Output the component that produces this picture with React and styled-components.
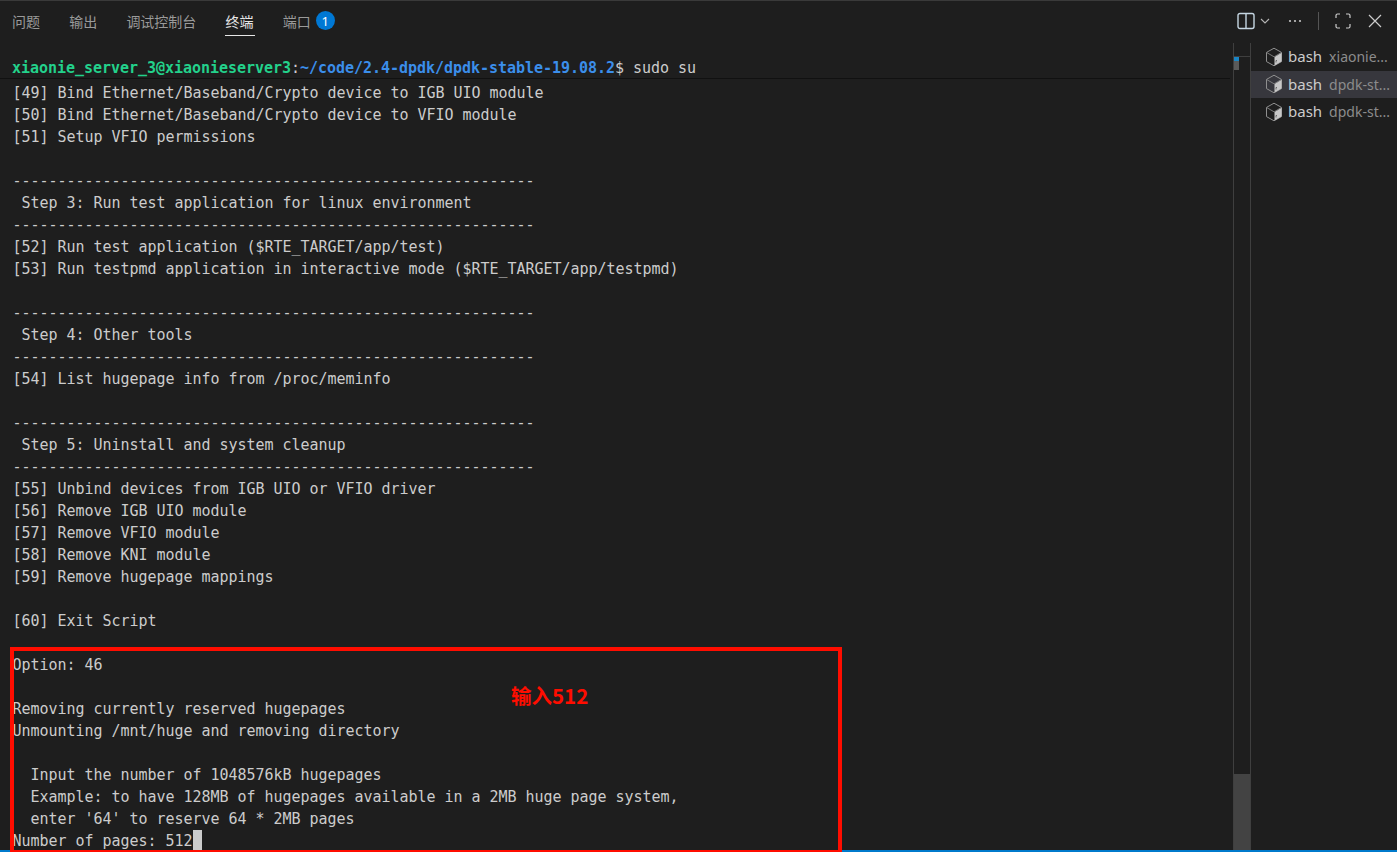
import React from "react";
import styled, { createGlobalStyle } from "styled-components";

const Global = createGlobalStyle`
  html, body { margin: 0; padding: 0; background: #1e1e1e; overflow: hidden; }
  #root { height: 852px; }
`;

const Page = styled.div`
  position: relative;
  width: 1397px;
  height: 852px;
  display: flex;
  flex-direction: column;
  background: #1e1e1e;
  border-top: 1px solid #3a3a3a;
  box-sizing: border-box;
  overflow: hidden;
`;
const TabBar = styled.div`
  height: 42px;
  flex: none;
  display: flex;
  align-items: flex-start;
  justify-content: space-between;
  padding: 0 15px 0 12px;
`;
const Tabs = styled.div`
  display: flex;
  gap: 29.2px;
  align-items: flex-start;
`;
const Tab = styled.div`
  height: 35px;
  padding-top: 10px;
  box-sizing: border-box;
  display: flex;
  gap: 5px;
  align-items: flex-start;
  font: 14px/20px "Noto Sans CJK SC", sans-serif;
  color: ${p => (p.$active ? "#e7e7e7" : "#9a9a9a")};
  border-bottom: ${p => (p.$active ? "1px solid #e7e7e7" : "none")};
  padding-left: ${p => (p.$active ? "1px" : "0")};
  padding-right: ${p => (p.$active ? "1px" : "0")};
  margin: 0 ${p => (p.$active ? "-1px" : "0")};
`;
const Badge = styled.span`
  width: 19px;
  height: 19px;
  border-radius: 50%;
  background: #0078d4;
  color: #fff;
  font: 13px/20px "Noto Sans", sans-serif;
  text-align: center;
`;
const Actions = styled.div`
  display: flex;
  align-items: center;
  height: 40px;
  color: #cccccc;
`;
const Sep = styled.div`
  width: 1px;
  height: 18px;
  background: #555;
  margin: 0 16px;
`;
const Icon = styled.svg`
  display: block;
  flex: none;
  margin-left: ${p => p.$ml || 0}px;
`;
const Main = styled.div`
  flex: 1;
  min-height: 0;
  display: flex;
`;
const TermWrap = styled.div`
  width: 1233px;
  flex: none;
  padding-top: 14px;
  display: flex;
  flex-direction: column;
  min-height: 0;
`;
const Sticky = styled.div`
  height: 21px;
  flex: none;
  padding-left: 12px;
  border-bottom: 1px solid #111;
  margin-right: 3px;
  font: 15px/22px "DejaVu Sans Mono", monospace;
  letter-spacing: -0.03px;
  color: #cccccc;
  white-space: pre;
  position: relative;
  z-index: 1;
  background: #1e1e1e;
`;
const Green = styled.b`
  color: #23d18b;
`;
const Blue = styled.b`
  color: #3b8eea;
`;
const Screen = styled.div`
  flex: 1;
  min-height: 0;
  overflow: hidden;
  margin-top: -19px;
  padding-left: 12.5px;
`;
const Line = styled.div`
  height: 22px;
  font: 15px/22px "DejaVu Sans Mono", monospace;
  letter-spacing: -0.03px;
  color: #cccccc;
  white-space: pre;
`;
const Cursor = styled.span`
  display: inline-block;
  width: 9px;
  height: 22px;
  vertical-align: top;
  background: #cccccc;
`;
const Scrollbar = styled.div`
  width: 18px;
  flex: none;
  position: relative;
  box-sizing: border-box;
  border-left: 1px solid #3f3f3f;
  border-right: 1px solid #3f3f3f;
  display: flex;
  flex-direction: column;
  justify-content: flex-end;
`;
const ScrollRule = styled.div`
  position: absolute;
  top: 13px;
  left: 0;
  right: 0;
  height: 1px;
  background: #3f3f3f;
`;
const MarkBlue = styled.div`
  position: absolute;
  top: 14px;
  left: 0;
  width: 5px;
  height: 4px;
  background: #1a85c4;
`;
const MarkGrey = styled.div`
  position: absolute;
  top: 18px;
  left: 0;
  width: 5px;
  height: 9px;
  background: #5a5a5a;
`;
const Thumb = styled.div`
  height: 78px;
  background: #434343;
`;
const Side = styled.div`
  flex: 1;
`;
const SideRow = styled.div`
  height: 27.5px;
  display: flex;
  align-items: center;
  padding-left: 14px;
  gap: 5px;
  background: ${p => (p.$sel ? "#37373d" : "transparent")};
  font: 15px/27px "Noto Sans", sans-serif;
  color: #cccccc;
  white-space: nowrap;
  overflow: hidden;
`;
const SideDesc = styled.span`
  font-size: 14px;
  margin-left: 2px;
  color: #8c8c8c;
`;
const StatusLine = styled.div`
  position: absolute;
  left: 0;
  right: 0;
  bottom: 0;
  height: 2px;
  background: #007acc;
`;
const Annotation = styled.div`
  position: absolute;
  left: 10px;
  top: 646px;
  width: 832px;
  height: 207px;
  box-sizing: border-box;
  border: 4px solid #ff0d00;
`;
const AnnotationText = styled.div`
  position: absolute;
  left: 511px;
  top: 680px;
  font: bold 20.5px/28px "Noto Sans CJK SC", sans-serif;
  color: #ff0d00;
`;

const dash = "-".repeat(58);
const lines = [
  "[49] Bind Ethernet/Baseband/Crypto device to IGB UIO module",
  "[50] Bind Ethernet/Baseband/Crypto device to VFIO module",
  "[51] Setup VFIO permissions",
  "",
  dash,
  " Step 3: Run test application for linux environment",
  dash,
  "[52] Run test application ($RTE_TARGET/app/test)",
  "[53] Run testpmd application in interactive mode ($RTE_TARGET/app/testpmd)",
  "",
  dash,
  " Step 4: Other tools",
  dash,
  "[54] List hugepage info from /proc/meminfo",
  "",
  dash,
  " Step 5: Uninstall and system cleanup",
  dash,
  "[55] Unbind devices from IGB UIO or VFIO driver",
  "[56] Remove IGB UIO module",
  "[57] Remove VFIO module",
  "[58] Remove KNI module",
  "[59] Remove hugepage mappings",
  "",
  "[60] Exit Script",
  "",
  "Option: 46",
  "",
  "Removing currently reserved hugepages",
  "Unmounting /mnt/huge and removing directory",
  "",
  "  Input the number of 1048576kB hugepages",
  "  Example: to have 128MB of hugepages available in a 2MB huge page system,",
  "  enter '64' to reserve 64 * 2MB pages",
];

const BoxIcon = () => (
  <Icon width="18" height="20" viewBox="0 0 18 20" fill="none">
    <path d="M9 1.2 L16.5 5.4 V14.6 L9 18.8 L1.5 14.6 V5.4 Z" stroke="#8f8f8f" strokeWidth="1" />
    <path d="M9.5 10 L16.5 5.8 V14.4 L9.5 18.4 Z" fill="#c8c8c8" />
    <path d="M1.8 5.6 L9 9.8 M9.2 9.8 L16.2 5.6" stroke="#8f8f8f" strokeWidth="0.8" />
    <path d="M11 15.5 v-2 h1" stroke="#555" strokeWidth="0.8" />
  </Icon>
);

const terms = [
  ["xiaonie...", false],
  ["dpdk-st...", true],
  ["dpdk-st...", false],
];

export default function App() {
  return (
    <Page>
      <Global />
      <TabBar>
        <Tabs>
          <Tab>问题</Tab>
          <Tab>输出</Tab>
          <Tab>调试控制台</Tab>
          <Tab $active>终端</Tab>
          <Tab>端口<Badge>1</Badge></Tab>
        </Tabs>
        <Actions>
          <Icon width="18" height="18" viewBox="0 0 18 18" fill="none">
            <rect x="1" y="1.5" width="16" height="15" rx="2" stroke="#c5d6e2" strokeWidth="1.4" />
            <path d="M9 1.5V16.5" stroke="#c5d6e2" strokeWidth="1.4" />
          </Icon>
          <Icon $ml={5} width="10" height="6" viewBox="0 0 10 6" fill="none">
            <path d="M1 1l4 4 4-4" stroke="#b5b5b5" strokeWidth="1.1" />
          </Icon>
          <Icon $ml={18} width="14" height="4" viewBox="0 0 14 4" fill="#c5c5c5">
            <circle cx="2" cy="2" r="1.1" />
            <circle cx="7" cy="2" r="1.1" />
            <circle cx="12" cy="2" r="1.1" />
          </Icon>
          <Sep />
          <Icon width="16" height="16" viewBox="0 0 16 16" fill="none" stroke="#cccccc" strokeWidth="1.2">
            <path d="M1 5V2.5A1.5 1.5 0 0 1 2.5 1H5M11 1h2.5A1.5 1.5 0 0 1 15 2.5V5M15 11v2.5a1.5 1.5 0 0 1-1.5 1.5H11M5 15H2.5A1.5 1.5 0 0 1 1 13.5V11" />
          </Icon>
          <Icon $ml={17} width="14" height="14" viewBox="0 0 14 14" fill="none" stroke="#cccccc" strokeWidth="1.2">
            <path d="M1 1l12 12M13 1L1 13" />
          </Icon>
        </Actions>
      </TabBar>
      <Main>
        <TermWrap>
          <Sticky>
            <Green>xiaonie_server_3@xiaonieserver3</Green>:<Blue>~/code/2.4-dpdk/dpdk-stable-19.08.2</Blue>$ sudo su
          </Sticky>
          <Screen>
            <Line>[48] Insert KNI module</Line>
            {lines.map((l, i) => (
              <Line key={i}>{l}</Line>
            ))}
            <Line>Number of pages: 512<Cursor /></Line>
          </Screen>
        </TermWrap>
        <Scrollbar>
          <ScrollRule />
          <MarkBlue />
          <MarkGrey />
          <Thumb />
        </Scrollbar>
        <Side>
          {terms.map(([d, s], i) => (
            <SideRow key={i} $sel={s}>
              <BoxIcon />
              <span>bash</span>
              <SideDesc>{d}</SideDesc>
            </SideRow>
          ))}
        </Side>
      </Main>
      <StatusLine />
      <Annotation />
      <AnnotationText>输入512</AnnotationText>
    </Page>
  );
}
